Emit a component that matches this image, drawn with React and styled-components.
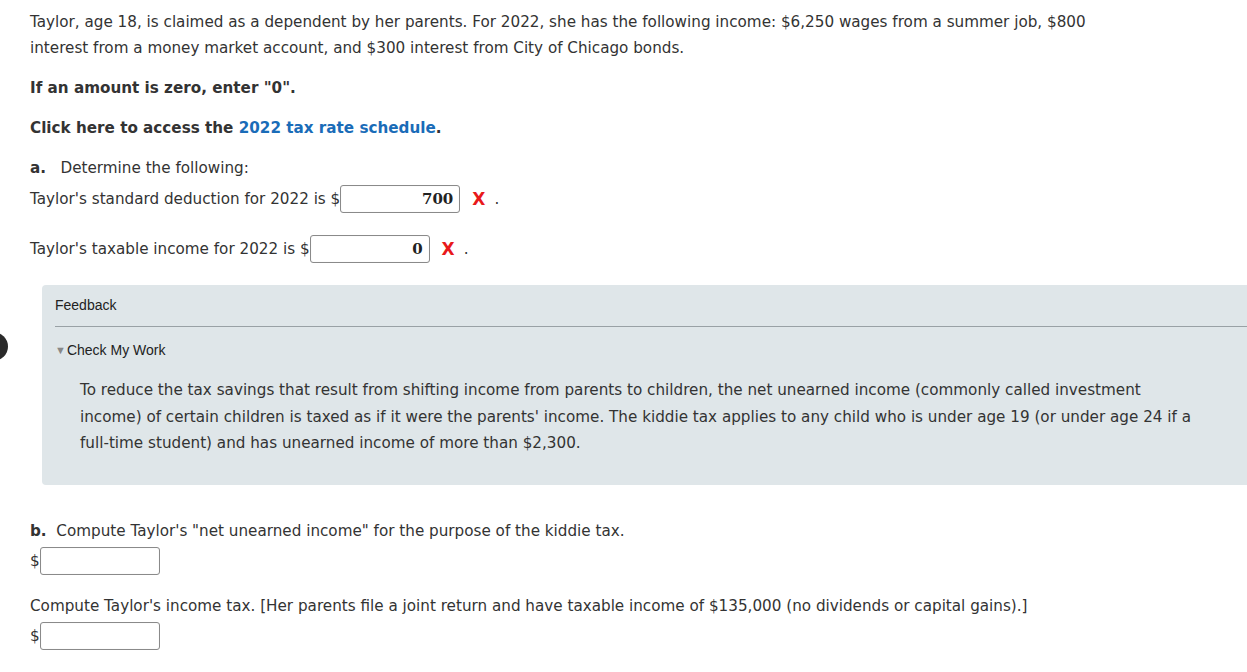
import React from "react";
import styled, { createGlobalStyle } from "styled-components";

const Global = createGlobalStyle`
  html, body { margin: 0; padding: 0; background: #fff; }
  body { font-family: "DejaVu Sans", Verdana, sans-serif; color: #333; overflow: hidden; }
`;

const Page = styled.div`
  padding: ${(p) => p.$pt || 0}px 0 0 30px;
  font-size: 15.2px;
  line-height: 26px;
  width: 1217px;
`;

const Para = styled.p`
  margin: ${(p) => p.$mt || 0}px 0 0 0;
  max-width: ${(p) => p.$max || 1100}px;
`;

const Strong = styled.span`
  font-weight: bold;
`;

const Link = styled.a`
  color: #1a6cb8;
  font-weight: bold;
  text-decoration: none;
`;

const Row = styled.div`
  display: flex;
  align-items: center;
  margin-top: ${(p) => p.$mt || 0}px;
  height: 28px;
`;

const Input = styled.div`
  box-sizing: border-box;
  width: 120px;
  height: 28px;
  border: 1px solid #8a8a8a;
  border-radius: 3px;
  box-shadow: inset 0 0 1px rgba(0,0,0,0.15);
  background: #fff;
  text-align: right;
  padding: 0 6px;
  font-family: "DejaVu Serif", Georgia, serif;
  font-weight: bold;
  font-size: 15px;
  line-height: 26px;
  color: #222;
`;

const Wrong = styled.span`
  color: #e8191b;
  font-weight: bold;
  font-size: 17px;
  margin-left: 12px;
  font-family: "DejaVu Sans", sans-serif;
`;

const Dot = styled.span`
  margin-left: 9px;
`;

const Panel = styled.div`
  margin: 22px 0 0 42px;
  width: 1220px;
  background: #dfe6e9;
  border-radius: 4px 0 0 4px;
  padding: 11px 0 30px 13px;
  box-sizing: border-box;
  height: 200px;
  font-size: 15.2px;
`;

const PanelTitle = styled.div`
  font-family: "Liberation Sans", Arial, sans-serif;
  font-size: 14px;
  line-height: 18px;
  color: #222;
`;

const Rule = styled.div`
  height: 1px;
  background: #99a1a5;
  margin-top: 12px;
`;

const Toggle = styled.div`
  font-family: "Liberation Sans", Arial, sans-serif;
  font-size: 14px;
  line-height: 18px;
  color: #222;
  margin-top: 14px;
  display: flex;
  align-items: center;
`;

const Tri = styled.span`
  color: #888;
  font-size: 11px;
  margin-right: 1px;
`;

const FeedText = styled.p`
  margin: 18px 0 0 25px;
  max-width: 1122px;
  line-height: 26.5px;
`;

const Blob = styled.div`
  position: fixed;
  left: -22px;
  top: 332px;
  width: 30px;
  height: 29px;
  border-radius: 50%;
  background: #2a2a2a;
`;

const Label = styled.span``;

export default function App() {
  return (
    <>
      <Global />
      <Blob />
      <Page $pt={9}>
        <Para $max={1085}>
          Taylor, age 18, is claimed as a dependent by her parents. For 2022, she has the following income: $6,250 wages from a summer job, $800 interest from a money market account, and $300 interest from City of Chicago bonds.
        </Para>
        <Para $mt={14}><Strong>If an amount is zero, enter "0".</Strong></Para>
        <Para $mt={14}>
          <Strong>Click here to access the </Strong>
          <Link href="#">2022 tax rate schedule</Link>
          <Strong>.</Strong>
        </Para>
        <Para $mt={14}>
          <Strong>a.</Strong>&nbsp;&nbsp; Determine the following:
        </Para>
        <Row $mt={4}>
          <Label>Taylor's standard deduction for 2022 is $</Label>
          <Input>700</Input>
          <Wrong>X</Wrong>
          <Dot>.</Dot>
        </Row>
        <Row $mt={22}>
          <Label>Taylor's taxable income for 2022 is $</Label>
          <Input>0</Input>
          <Wrong>X</Wrong>
          <Dot>.</Dot>
        </Row>
      </Page>
      <Panel>
        <PanelTitle>Feedback</PanelTitle>
        <Rule />
        <Toggle><Tri>▼</Tri>Check My Work</Toggle>
        <FeedText>
          To reduce the tax savings that result from shifting income from parents to children, the net unearned income (commonly called investment income) of certain children is taxed as if it were the parents' income. The kiddie tax applies to any child who is under age 19 (or under age 24 if a full-time student) and has unearned income of more than $2,300.
        </FeedText>
      </Panel>
      <Page>
        <Para $mt={33}>
          <Strong>b.</Strong>&nbsp; Compute Taylor's "net unearned income" for the purpose of the kiddie tax.
        </Para>
        <Row $mt={3}>
          <Label>$</Label>
          <Input />
        </Row>
        <Para $mt={18}>
          Compute Taylor's income tax. [Her parents file a joint return and have taxable income of $135,000 (no dividends or capital gains).]
        </Para>
        <Row $mt={3}>
          <Label>$</Label>
          <Input />
        </Row>
      </Page>
    </>
  );
}
